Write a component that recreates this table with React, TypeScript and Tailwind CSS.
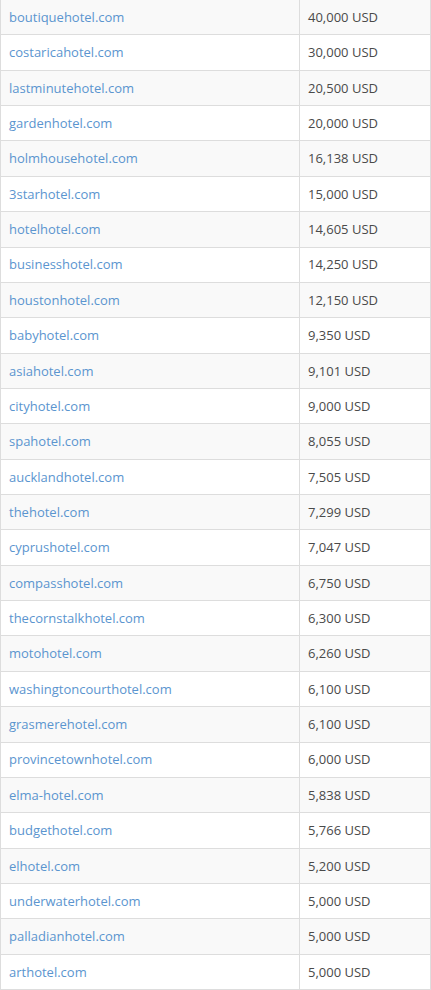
import React from 'react';

const rows: [string, string][] = [
  ['boutiquehotel.com', '40,000 USD'],
  ['costaricahotel.com', '30,000 USD'],
  ['lastminutehotel.com', '20,500 USD'],
  ['gardenhotel.com', '20,000 USD'],
  ['holmhousehotel.com', '16,138 USD'],
  ['3starhotel.com', '15,000 USD'],
  ['hotelhotel.com', '14,605 USD'],
  ['businesshotel.com', '14,250 USD'],
  ['houstonhotel.com', '12,150 USD'],
  ['babyhotel.com', '9,350 USD'],
  ['asiahotel.com', '9,101 USD'],
  ['cityhotel.com', '9,000 USD'],
  ['spahotel.com', '8,055 USD'],
  ['aucklandhotel.com', '7,505 USD'],
  ['thehotel.com', '7,299 USD'],
  ['cyprushotel.com', '7,047 USD'],
  ['compasshotel.com', '6,750 USD'],
  ['thecornstalkhotel.com', '6,300 USD'],
  ['motohotel.com', '6,260 USD'],
  ['washingtoncourthotel.com', '6,100 USD'],
  ['grasmerehotel.com', '6,100 USD'],
  ['provincetownhotel.com', '6,000 USD'],
  ['elma-hotel.com', '5,838 USD'],
  ['budgethotel.com', '5,766 USD'],
  ['elhotel.com', '5,200 USD'],
  ['underwaterhotel.com', '5,000 USD'],
  ['palladianhotel.com', '5,000 USD'],
  ['arthotel.com', '5,000 USD'],
];

export default function App() {
  return (
    <div className="w-[431px] h-[990px] overflow-hidden bg-white font-['Open_Sans',sans-serif] text-[13px]">
      <div className="border-l border-r border-[#dddddd]">
        {rows.map(([domain, price], i) => (
          <div
            key={domain}
            className={`grid grid-cols-[299px_1fr] h-[35.36px] border-b border-[#dddddd] ${i % 2 === 0 ? 'bg-[#f9f9f9]' : 'bg-white'}`}
          >
            <div className="flex items-center px-2 pt-px border-r border-[#dddddd]">
              <a href="#" className="text-[#5b95cf]">{domain}</a>
            </div>
            <div className="flex items-center px-2 pt-px text-[#4a4a4a]">{price}</div>
          </div>
        ))}
      </div>
    </div>
  );
}
